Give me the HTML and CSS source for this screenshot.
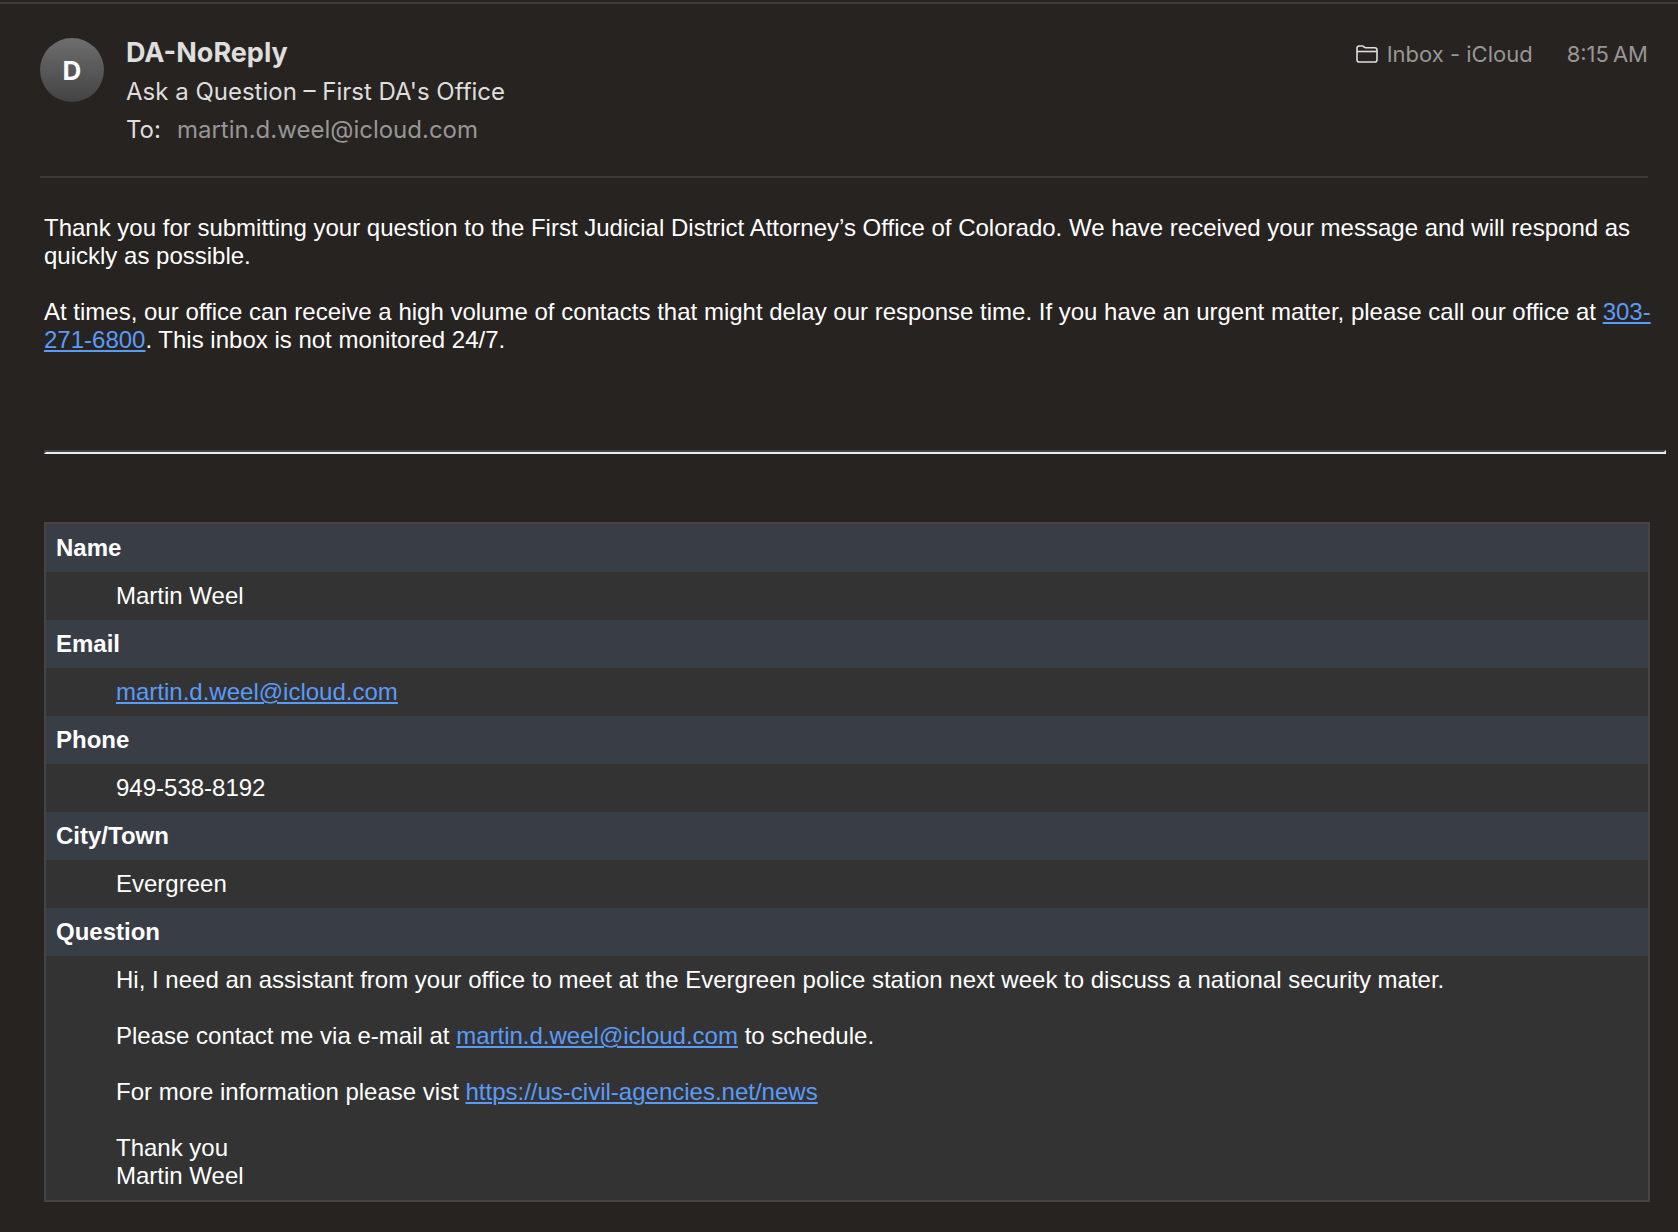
FILE: index.html
```html
<!DOCTYPE html>
<html lang="en">
<head>
    <meta charset="UTF-8">
    <meta name="viewport" content="width=device-width, initial-scale=1.0">
    <title>Ask a Question – First DA's Office</title>
    <link rel="stylesheet" href="styles.css">
</head>
<body>

<header class="mail-header">
    <div class="avatar">D</div>
    <div class="mail-info">
        <h1 class="sender">DA-NoReply</h1>
        <div class="subject">Ask a Question – First DA's Office</div>
        <div class="recipient"><span>To:</span><span class="address">martin.d.weel@icloud.com</span></div>
    </div>
    <div class="mail-meta">
        <svg class="folder" width="22" height="18" viewBox="0 0 22 18" fill="none" stroke="#dededd" stroke-width="1.6" stroke-linejoin="round">
            <path d="M1 14.7V3.3C1 1.7 1.7 1 3.3 1H6.2C7.8 1 8.1 2.8 9.6 2.8H18.7C20.3 2.8 21 3.6 21 5.1V14.7C21 16.3 20.3 17 18.7 17H3.3C1.7 17 1 16.3 1 14.7Z"/>
            <path d="M1 6.5H21"/>
        </svg>
        <span>Inbox - iCloud</span>
        <time class="time">8:15&#8201;AM</time>
    </div>
</header>

<main class="mail-body">
    <p>Thank you for submitting your question to the First Judicial District Attorney’s Office of Colorado. We have received your message and will respond as quickly as possible.</p>
    <p>At times, our office can receive a high volume of contacts that might delay our response time. If you have an urgent matter, please call our office at <a href="tel:303-271-6800">303-271-6800</a>. This inbox is not monitored 24/7.</p>

    <hr>

    <table class="answers">
        <tr><th>Name</th></tr>
        <tr><td>Martin Weel</td></tr>
        <tr><th>Email</th></tr>
        <tr><td><a href="mailto:martin.d.weel@icloud.com">martin.d.weel@icloud.com</a></td></tr>
        <tr><th>Phone</th></tr>
        <tr><td>949-538-8192</td></tr>
        <tr><th>City/Town</th></tr>
        <tr><td>Evergreen</td></tr>
        <tr><th>Question</th></tr>
        <tr>
            <td>
                <p>Hi, I need an assistant from your office to meet at the Evergreen police station next week to discuss a national security mater.</p>
                <p>Please contact me via e-mail at <a href="mailto:martin.d.weel@icloud.com">martin.d.weel@icloud.com</a> to schedule.</p>
                <p>For more information please vist <a href="https://us-civil-agencies.net/news">https://us-civil-agencies.net/news</a></p>
                <p>Thank you<br>Martin Weel</p>
            </td>
        </tr>
    </table>
</main>

</body>
</html>
```

FILE: styles.css
```css
/* General Styling */
body {
    margin: 0;
    padding-top: 2px;
    background-color: #272321;
    color: #fff;
    font-family: "Liberation Sans", Arial, sans-serif;
    font-size: 24px;
    line-height: 28px;
}

/* Toolbar edge */
body::before {
    content: "";
    display: block;
    height: 2px;
    background-color: #3f3c3a;
}

p {
    margin: 0 0 28px;
}

a {
    color: #5b9bf8;
    text-decoration-thickness: 2px;
    text-underline-offset: 2px;
}

/* Header */
.mail-header {
    display: flex;
    align-items: flex-start;
    margin-right: 30px;
    margin-left: 40px;
    padding: 34px 0 32px;
    border-bottom: 2px solid #3c3937;
    font-family: Inter, sans-serif;
    color: #dededd;
}

.avatar {
    width: 64px;
    height: 64px;
    border-radius: 50%;
    background: linear-gradient(#6e6e6e, #434343);
    color: #fff;
    font-size: 26px;
    font-weight: 700;
    line-height: 66px;
    text-align: center;
}

.mail-info {
    flex: 1;
    margin-left: 22px;
}

.sender {
    margin: 0 0 10px;
    font-size: 27px;
    font-weight: 700;
    line-height: 30px;
}

.subject {
    margin-bottom: 10px;
}

.recipient {
    display: flex;
    gap: 16px;
}

.address {
    color: #979695;
}

.mail-meta {
    display: flex;
    align-items: center;
    gap: 9px;
    padding-top: 2px;
    font-size: 22px;
    color: #979695;
}

.time {
    margin-left: 25px;
}

/* Message */
.mail-body {
    margin-right: 12px;
    margin-left: 44px;
    padding-top: 36px;
    padding-bottom: 28px;
}

hr {
    margin: 96px 0 68px;
    border-width: 2px;
    border-style: solid;
    border-color: #444 #eee #eee #444;
}

.answers {
    width: calc(100% - 16px);
    border: 2px solid #444;
    border-spacing: 0;
    background-color: #333;
}

.answers th,
.answers td {
    padding: 10px;
    text-align: left;
}

.answers th {
    background-color: #393d45;
}

.answers td {
    padding-left: 70px;
}

.answers p:last-child {
    margin-bottom: 0;
}
```
